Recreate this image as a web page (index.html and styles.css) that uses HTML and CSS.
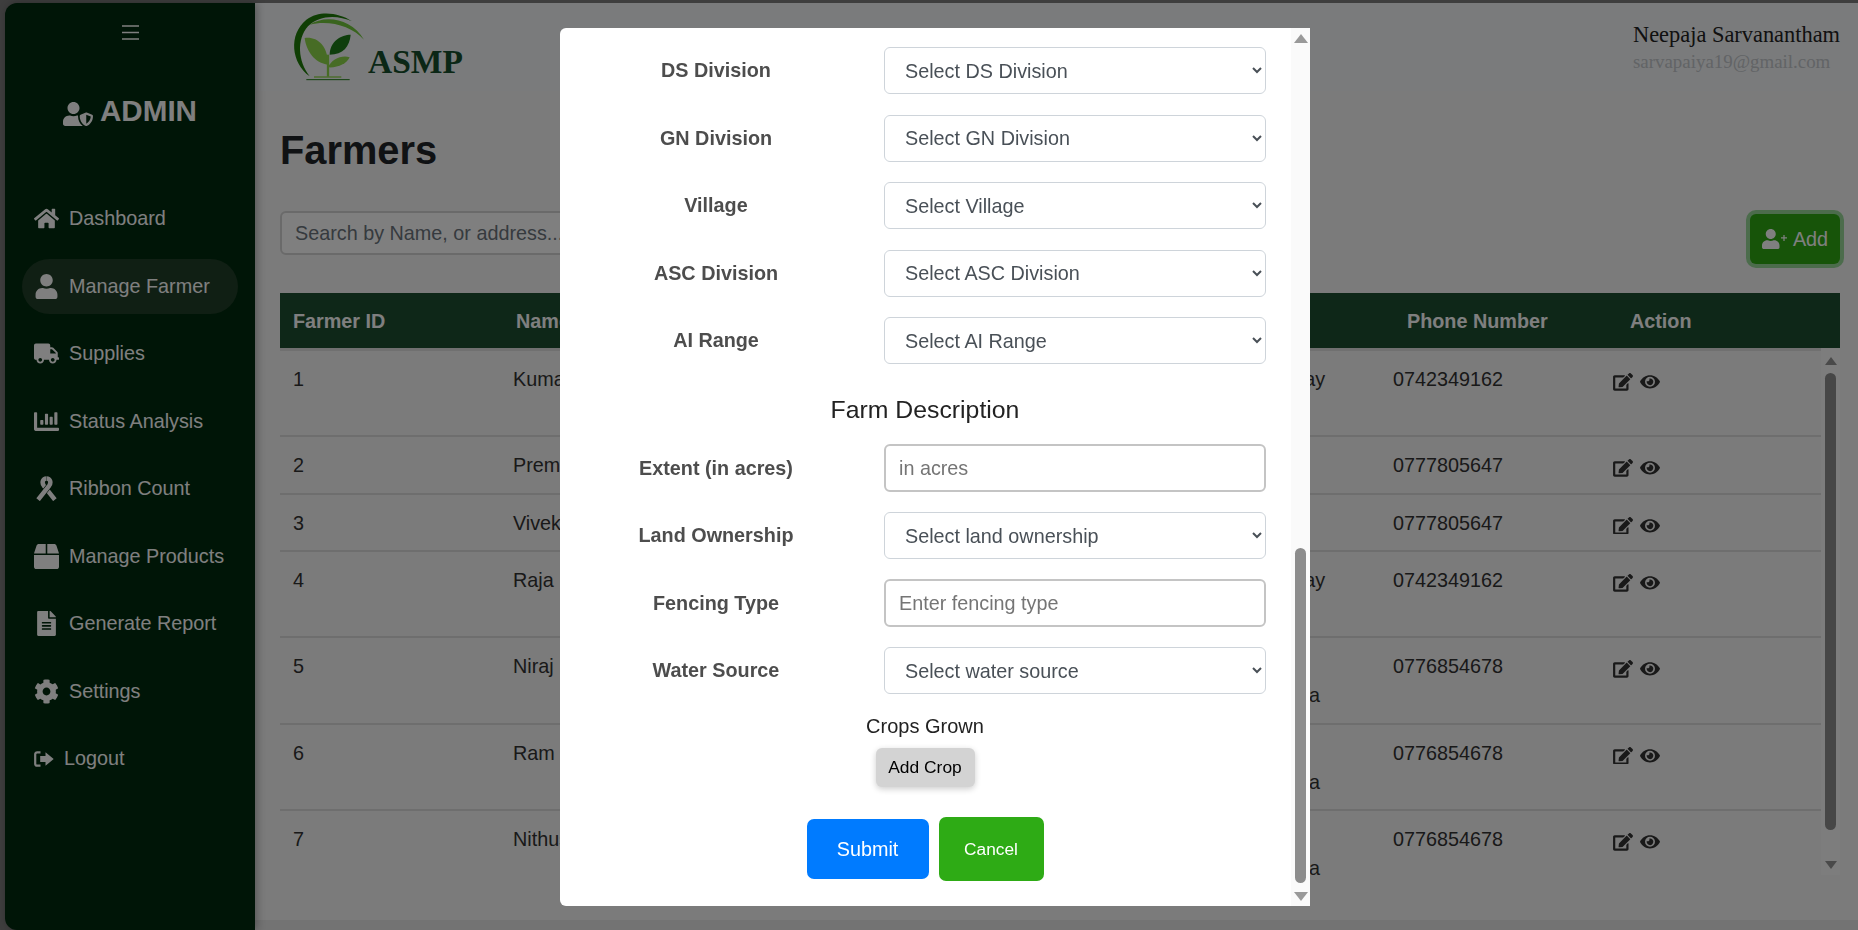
FILE: index.html
```html
<!DOCTYPE html>
<html lang="en">
<head>
  <meta charset="UTF-8">
  <title>Farmers</title>
  <link rel="stylesheet" href="styles.css">
</head>
<body>
  <div class="page">
    <aside class="sidebar">
      <button class="menu-toggle" aria-label="Menu">
        <svg viewBox="0 0 17 15" width="17" height="15"><path d="M0 1h17M0 7.5h17M0 14h17" stroke="#fff" stroke-width="1.5"/></svg>
      </button>
      <div class="brand">
        <svg class="brand-icon" viewBox="0 0 640 512"><path d="M622.3 271.1l-115.2-45c-3.5-1.4-10.3-3.1-17.7 0l-115.2 45c-10.7 4.2-17.7 14-17.7 24.9 0 111.6 68.7 188.8 132.9 213.9 7.4 2.9 14.2 1.4 17.7 0 51.4-20.1 132.9-89.3 132.9-213.9 0-10.9-7-20.7-17.7-24.9zM496 462.4V273.3l95.5 37.3c-5.6 87.1-60.9 135.4-95.5 151.8zM224 256c70.7 0 128-57.3 128-128S294.7 0 224 0 96 57.3 96 128s57.3 128 128 128zm96 40c0-2.5.8-4.8 1.1-7.2-2.5-.1-4.9-.8-7.5-.8h-16.7c-22.2 10.2-46.9 16-72.9 16s-50.6-5.8-72.9-16h-16.7C60.2 288 0 348.2 0 422.4V464c0 26.5 21.5 48 48 48h352c6.8 0 13.3-1.5 19.2-4-54-42.9-99.2-116.7-99.2-212z"/></svg>
        <span>ADMIN</span>
      </div>
      <nav class="nav">
        <a class="nav-item" href="#">
          <svg class="nav-icon" viewBox="0 0 576 512"><path d="M280.37 148.26L96 300.11V464a16 16 0 0 0 16 16l112.06-.29a16 16 0 0 0 15.92-16V368a16 16 0 0 1 16-16h64a16 16 0 0 1 16 16v95.64a16 16 0 0 0 16 16.05L464 480a16 16 0 0 0 16-16V300L295.67 148.26a12.19 12.19 0 0 0-15.3 0zM571.6 251.47L488 182.56V44.05a12 12 0 0 0-12-12h-56a12 12 0 0 0-12 12v72.61L318.47 43a48 48 0 0 0-61 0L4.34 251.47a12 12 0 0 0-1.6 16.9l25.5 31A12 12 0 0 0 45.15 301l235.22-193.74a12.19 12.19 0 0 1 15.3 0L530.9 301a12 12 0 0 0 16.9-1.6l25.5-31a12 12 0 0 0-1.7-16.93z"/></svg>
          Dashboard
        </a>
        <a class="nav-item active" href="#">
          <svg class="nav-icon" viewBox="0 0 448 512"><path d="M224 256c70.7 0 128-57.3 128-128S294.7 0 224 0 96 57.3 96 128s57.3 128 128 128zm89.6 32h-16.7c-22.2 10.2-46.9 16-72.9 16s-50.6-5.8-72.9-16h-16.7C60.2 288 0 348.2 0 422.4V464c0 26.5 21.5 48 48 48h352c26.5 0 48-21.5 48-48v-41.6c0-74.2-60.2-134.4-134.4-134.4z"/></svg>
          Manage Farmer
        </a>
        <a class="nav-item" href="#">
          <svg class="nav-icon" viewBox="0 0 640 512"><path d="M624 352h-16V243.9c0-12.7-5.1-24.9-14.1-33.9L494 110.1c-9-9-21.2-14.1-33.9-14.1H416V48c0-26.5-21.5-48-48-48H48C21.5 0 0 21.5 0 48v320c0 26.5 21.5 48 48 48h16c0 53 43 96 96 96s96-43 96-96h128c0 53 43 96 96 96s96-43 96-96h48c8.8 0 16-7.2 16-16v-32c0-8.8-7.2-16-16-16zM160 464c-26.5 0-48-21.5-48-48s21.5-48 48-48 48 21.5 48 48-21.5 48-48 48zm320 0c-26.5 0-48-21.5-48-48s21.5-48 48-48 48 21.5 48 48-21.5 48-48 48zm80-208H416V144h44.1l99.9 99.9V256z"/></svg>
          Supplies
        </a>
        <a class="nav-item" href="#">
          <svg class="nav-icon" viewBox="0 0 512 512"><path d="M332.8 320h38.4c6.4 0 12.8-6.4 12.8-12.8V172.8c0-6.4-6.4-12.8-12.8-12.8h-38.4c-6.4 0-12.8 6.4-12.8 12.8v134.4c0 6.4 6.4 12.8 12.8 12.8zm96 0h38.4c6.4 0 12.8-6.4 12.8-12.8V76.8c0-6.4-6.4-12.8-12.8-12.8h-38.4c-6.4 0-12.8 6.4-12.8 12.8v230.4c0 6.4 6.4 12.8 12.8 12.8zm-288 0h38.4c6.4 0 12.8-6.4 12.8-12.8v-70.4c0-6.4-6.4-12.8-12.8-12.8h-38.4c-6.4 0-12.8 6.4-12.8 12.8v70.4c0 6.4 6.4 12.8 12.8 12.8zm96 0h38.4c6.4 0 12.8-6.4 12.8-12.8V108.8c0-6.4-6.4-12.8-12.8-12.8h-38.4c-6.4 0-12.8 6.4-12.8 12.8v198.4c0 6.4 6.4 12.8 12.8 12.8zM496 384H64V80c0-8.84-7.16-16-16-16H16C7.16 64 0 71.16 0 80v336c0 17.67 14.33 32 32 32h464c8.84 0 16-7.16 16-16v-32c0-8.84-7.16-16-16-16z"/></svg>
          Status Analysis
        </a>
        <a class="nav-item" href="#">
          <svg class="nav-icon" viewBox="0 0 448 512"><path d="M396 486L168 196C122 130 150 50 224 50" fill="none" stroke="#fff" stroke-width="92"/><path d="M52 486L280 196C326 130 298 50 224 50" fill="none" stroke="#002a0e" stroke-width="116"/><path d="M52 486L280 196C326 130 298 50 224 50" fill="none" stroke="#fff" stroke-width="92"/></svg>
          Ribbon Count
        </a>
        <a class="nav-item" href="#">
          <svg class="nav-icon" viewBox="0 0 512 512"><path d="M509.5 184.6L458.9 32.8C452.4 13.2 434.1 0 413.4 0H272v192h238.7c-.4-2.5-.4-5-1.2-7.4zM240 0H98.6c-20.7 0-39 13.2-45.5 32.8L2.5 184.6c-.8 2.4-.8 4.9-1.2 7.4H240V0zM0 224v240c0 26.5 21.5 48 48 48h416c26.5 0 48-21.5 48-48V224H0z"/></svg>
          Manage Products
        </a>
        <a class="nav-item" href="#">
          <svg class="nav-icon" viewBox="0 0 384 512"><path d="M224 136V0H24C10.7 0 0 10.7 0 24v464c0 13.3 10.7 24 24 24h336c13.3 0 24-10.7 24-24V160H248c-13.2 0-24-10.8-24-24zm64 236c0 6.6-5.4 12-12 12H108c-6.6 0-12-5.4-12-12v-8c0-6.6 5.4-12 12-12h168c6.6 0 12 5.4 12 12v8zm0-64c0 6.6-5.4 12-12 12H108c-6.6 0-12-5.4-12-12v-8c0-6.6 5.4-12 12-12h168c6.6 0 12 5.4 12 12v8zm0-72v8c0 6.6-5.4 12-12 12H108c-6.6 0-12-5.4-12-12v-8c0-6.6 5.4-12 12-12h168c6.6 0 12 5.4 12 12zm96-114.1v6.1H256V0h6.1c6.4 0 12.5 2.5 17 7l97.9 98c4.5 4.5 7 10.6 7 16.9z"/></svg>
          Generate Report
        </a>
        <a class="nav-item" href="#">
          <svg class="nav-icon" viewBox="0 0 512 512"><path d="M487.4 315.7l-42.6-24.6c4.3-23.2 4.3-47 0-70.2l42.6-24.6c4.9-2.8 7.1-8.6 5.5-14-11.1-35.6-30-67.8-54.7-94.6-3.8-4.1-10-5.1-14.8-2.3L380.8 110c-17.9-15.4-38.5-27.3-60.8-35.1V25.8c0-5.6-3.9-10.5-9.4-11.7-36.7-8.2-74.3-7.8-109.2 0-5.5 1.2-9.4 6.1-9.4 11.7V75c-22.2 7.9-42.8 19.8-60.8 35.1L88.7 85.5c-4.9-2.8-11-1.9-14.8 2.3-24.7 26.7-43.6 58.9-54.7 94.6-1.7 5.4.6 11.2 5.5 14L67.3 221c-4.3 23.2-4.3 47 0 70.2l-42.6 24.6c-4.9 2.8-7.1 8.6-5.5 14 11.1 35.6 30 67.8 54.7 94.6 3.8 4.1 10 5.1 14.8 2.3l42.6-24.6c17.9 15.4 38.5 27.3 60.8 35.1v49.2c0 5.6 3.9 10.5 9.4 11.7 36.7 8.2 74.3 7.8 109.2 0 5.5-1.2 9.4-6.1 9.4-11.7v-49.2c22.2-7.9 42.8-19.8 60.8-35.1l42.6 24.6c4.9 2.8 11 1.9 14.8-2.3 24.7-26.7 43.6-58.9 54.7-94.6 1.5-5.5-.7-11.3-5.6-14.1zM256 336c-44.1 0-80-35.9-80-80s35.9-80 80-80 80 35.9 80 80-35.9 80-80 80z"/></svg>
          Settings
        </a>
        <a class="nav-item logout" href="#">
          <svg class="logout-icon" viewBox="0 0 20 16"><path d="M6.5 1.3H3.2A2 2 0 0 0 1.2 3.3v9.4a2 2 0 0 0 2 2h3.3" fill="none" stroke="#fff" stroke-width="2.2"/><path d="M11.5 1.2L19.7 8l-8.2 6.8v-3.7H6.2V4.9h5.3z"/></svg>
          Logout
        </a>
      </nav>
    </aside>

    <main class="main">
      <header class="topbar">
        <div class="logo">
          <svg class="logo-mark" viewBox="30 10 240 225">
            <path d="M95 215C40 175 30 90 85 45C125 15 185 25 222 50C180 32 125 30 90 65C55 105 60 170 95 215Z" fill="#1f7d08"/>
            <path d="M95 60C140 30 220 40 258 105C220 62 150 45 95 60Z" fill="#72c83c"/>
            <path d="M80 100C115 95 150 120 150 180C110 175 85 140 80 100Z" fill="#8ed84a"/>
            <path d="M218 90C190 90 155 110 155 150C195 150 215 125 218 90Z" fill="#1f7d18"/>
            <path d="M215 158C190 150 160 165 150 188C180 190 205 178 215 158Z" fill="#8ed84a"/>
            <path d="M150 150V216" stroke="#8ed84a" stroke-width="7" fill="none"/>
            <path d="M108 217H190" stroke="#8ed84a" stroke-width="4" fill="none"/>
            <path d="M85 225H215" stroke="#1f7d18" stroke-width="3" fill="none"/>
          </svg>
          <span class="logo-text">ASMP</span>
        </div>
        <div class="user">
          <div class="user-name">Neepaja Sarvanantham</div>
          <div class="user-mail">sarvapaiya19@gmail.com</div>
        </div>
      </header>

      <section class="content">
        <h1 class="title">Farmers</h1>
        <div class="toolbar">
          <input class="search" type="text" placeholder="Search by Name, or address...">
          <button class="add-btn">
            <svg viewBox="0 0 640 512" width="25" height="20"><path d="M224 256c70.7 0 128-57.3 128-128S294.7 0 224 0 96 57.3 96 128s57.3 128 128 128zm89.6 32h-16.7c-22.2 10.2-46.9 16-72.9 16s-50.6-5.8-72.9-16h-16.7C60.2 288 0 348.2 0 422.4V464c0 26.5 21.5 48 48 48h352c26.5 0 48-21.5 48-48v-41.6c0-74.2-60.2-134.4-134.4-134.4z"/><path d="M563 153v154M486 230h154" stroke="#fff" stroke-width="32" fill="none"/></svg>
            Add
          </button>
        </div>

        <table class="head-table">
          <colgroup>
            <col class="h-id"><col class="h-name"><col class="h-addr"><col class="h-phone"><col class="h-action">
          </colgroup>
          <thead>
            <tr><th>Farmer ID</th><th>Name</th><th>Address</th><th>Phone Number</th><th>Action</th></tr>
          </thead>
        </table>

        <div class="table-wrap">
          <div class="table-scroll">
            <table class="body-table">
              <colgroup>
                <col class="b-id"><col class="b-name"><col class="b-addr"><col class="b-phone"><col class="b-action">
              </colgroup>
              <tbody>
                <tr>
                  <td>1</td><td>Kumar</td><td>Main Road, Subway<br>Kilinochchi</td><td>0742349162</td>
                  <td><div class="actions"><svg class="act-icon" viewBox="0 0 576 512"><use href="#i-edit"/></svg><svg class="act-icon" viewBox="0 0 576 512"><use href="#i-eye"/></svg></div></td>
                </tr>
                <tr>
                  <td>2</td><td>Premkumar</td><td>Nallur, Jaffna</td><td>0777805647</td>
                  <td><div class="actions"><svg class="act-icon" viewBox="0 0 576 512"><use href="#i-edit"/></svg><svg class="act-icon" viewBox="0 0 576 512"><use href="#i-eye"/></svg></div></td>
                </tr>
                <tr>
                  <td>3</td><td>Vivek</td><td>Nallur, Jaffna</td><td>0777805647</td>
                  <td><div class="actions"><svg class="act-icon" viewBox="0 0 576 512"><use href="#i-edit"/></svg><svg class="act-icon" viewBox="0 0 576 512"><use href="#i-eye"/></svg></div></td>
                </tr>
                <tr>
                  <td>4</td><td>Raja</td><td>Main Road, Subway<br>Kilinochchi</td><td>0742349162</td>
                  <td><div class="actions"><svg class="act-icon" viewBox="0 0 576 512"><use href="#i-edit"/></svg><svg class="act-icon" viewBox="0 0 576 512"><use href="#i-eye"/></svg></div></td>
                </tr>
                <tr>
                  <td>5</td><td>Niraj</td><td>24, Temple Street,<br>Kopay Town, Jaffna</td><td>0776854678</td>
                  <td><div class="actions"><svg class="act-icon" viewBox="0 0 576 512"><use href="#i-edit"/></svg><svg class="act-icon" viewBox="0 0 576 512"><use href="#i-eye"/></svg></div></td>
                </tr>
                <tr>
                  <td>6</td><td>Ram</td><td>24, Temple Street,<br>Kopay Town, Jaffna</td><td>0776854678</td>
                  <td><div class="actions"><svg class="act-icon" viewBox="0 0 576 512"><use href="#i-edit"/></svg><svg class="act-icon" viewBox="0 0 576 512"><use href="#i-eye"/></svg></div></td>
                </tr>
                <tr>
                  <td>7</td><td>Nithushan</td><td>24, Temple Street,<br>Kopay Town, Jaffna</td><td>0776854678</td>
                  <td><div class="actions"><svg class="act-icon" viewBox="0 0 576 512"><use href="#i-edit"/></svg><svg class="act-icon" viewBox="0 0 576 512"><use href="#i-eye"/></svg></div></td>
                </tr>
              </tbody>
            </table>
          </div>
          <div class="rail">
            <span class="arrow-up"></span>
            <span class="rail-thumb"></span>
            <span class="arrow-down"></span>
          </div>
        </div>
      </section>
      <div class="bottom-band"></div>
    </main>
  </div>

  <div class="overlay">
    <div class="modal">
      <form class="modal-body">
        <div class="field-group">
          <div class="field">
            <label>DS Division</label>
            <select><option>Select DS Division</option></select>
          </div>
          <div class="field">
            <label>GN Division</label>
            <select><option>Select GN Division</option></select>
          </div>
          <div class="field">
            <label>Village</label>
            <select><option>Select Village</option></select>
          </div>
          <div class="field">
            <label>ASC Division</label>
            <select><option>Select ASC Division</option></select>
          </div>
          <div class="field">
            <label>AI Range</label>
            <select><option>Select AI Range</option></select>
          </div>
        </div>

        <h3 class="form-heading">Farm Description</h3>

        <div class="field-group tight">
          <div class="field">
            <label>Extent (in acres)</label>
            <input type="text" placeholder="in acres">
          </div>
          <div class="field">
            <label>Land Ownership</label>
            <select><option>Select land ownership</option></select>
          </div>
          <div class="field">
            <label>Fencing Type</label>
            <input type="text" placeholder="Enter fencing type">
          </div>
          <div class="field">
            <label>Water Source</label>
            <select><option>Select water source</option></select>
          </div>
        </div>

        <div class="crops-label">Crops Grown</div>
        <button type="button" class="add-crop">Add Crop</button>

        <div class="form-actions">
          <button type="button" class="submit-btn">Submit</button>
          <button type="button" class="cancel-btn">Cancel</button>
        </div>
      </form>
      <div class="modal-rail">
        <span class="m-arrow-up"></span>
        <span class="m-thumb"></span>
        <span class="m-arrow-down"></span>
      </div>
    </div>
  </div>

  <svg class="icon-defs" width="0" height="0">
    <defs>
      <path id="i-edit" d="M402.6 83.2l90.2 90.2c3.8 3.8 3.8 10 0 13.8L274.4 405.6l-92.8 10.3c-12.4 1.4-22.9-9.1-21.5-21.5l10.3-92.8L388.8 83.2c3.8-3.8 10-3.8 13.8 0zm162-22.9l-48.8-48.8c-15.2-15.2-39.9-15.2-55.2 0l-35.4 35.4c-3.8 3.8-3.8 10 0 13.8l90.2 90.2c3.8 3.8 10 3.8 13.8 0l35.4-35.4c15.2-15.3 15.2-40 0-55.2zM384 346.2V448H64V128h229.8c3.2 0 6.2-1.3 8.5-3.5l40-40c7.6-7.6 2.2-20.5-8.5-20.5H48C21.5 64 0 85.5 0 112v352c0 26.5 21.5 48 48 48h352c26.5 0 48-21.5 48-48V306.2c0-10.7-12.9-16-20.5-8.5l-40 40c-2.2 2.3-3.5 5.3-3.5 8.5z"/>
      <path id="i-eye" d="M572.52 241.4C518.29 135.59 410.93 64 288 64S57.68 135.64 3.48 241.41a32.35 32.35 0 0 0 0 29.19C57.71 376.41 165.07 448 288 448s230.32-71.64 284.52-177.41a32.35 32.35 0 0 0 0-29.19zM288 400a144 144 0 1 1 144-144 143.93 143.93 0 0 1-144 144zm0-240a95.31 95.31 0 0 0-25.31 3.79 47.85 47.85 0 0 1-66.9 66.9A95.78 95.78 0 1 0 288 160z"/>
    </defs>
  </svg>
</body>
</html>
```

FILE: styles.css
```css
* {
  box-sizing: border-box;
}

html, body {
  height: 100%;
}

body {
  margin: 0;
  background: #7c7c7c;
  color: #333;
  font-family: "Liberation Sans", Arial, sans-serif;
  font-size: 19.8px;
  overflow: hidden;
}

.page {
  display: flex;
  height: 100vh;
  padding: 3px 0 0 5px;
}

/* sidebar */
.sidebar {
  width: 250px;
  flex: none;
  background: #002a0e;
  color: #fff;
  border-radius: 12px 0 0 12px;
  box-shadow: 2px 0 8px rgba(0, 0, 0, 0.3);
  display: flex;
  flex-direction: column;
  align-items: center;
  padding-top: 21px;
  position: relative;
}

.menu-toggle {
  background: none;
  border: 0;
  padding: 0;
  height: 16px;
  display: flex;
  align-items: center;
}

.brand {
  display: flex;
  align-items: center;
  gap: 7px;
  height: 34px;
  margin-top: 54px;
  font-size: 29.6px;
  font-weight: bold;
}

.brand-icon {
  width: 30px;
  height: 24px;
  fill: #fff;
  margin-top: 6px;
}

.nav {
  width: 100%;
  margin-top: 63px;
  display: flex;
  flex-direction: column;
  gap: 12.5px;
  padding: 0 17px;
}

.nav-item {
  height: 55px;
  display: flex;
  align-items: center;
  gap: 10px;
  padding-left: 12px;
  border-radius: 28px;
  color: #fff;
  text-decoration: none;
}

.nav-item.active {
  background: #203e28;
}

.nav-icon {
  width: 25px;
  height: 25px;
  fill: #fff;
  flex: none;
}

.logout-icon {
  width: 20px;
  height: 16px;
  fill: #fff;
  flex: none;
}

/* main area */
.main {
  flex: 1;
  min-width: 0;
  display: flex;
  flex-direction: column;
  background: #f6f6f6;
}

.topbar {
  height: 88px;
  flex: none;
  background: #f5f7f9;
  display: flex;
  justify-content: space-between;
  padding: 0 18px 0 33px;
}

.logo {
  display: flex;
  align-items: flex-start;
}

.logo-mark {
  width: 80px;
  height: 75px;
  margin-top: 5px;
}

.logo-text {
  font-family: "Liberation Serif", serif;
  font-weight: bold;
  font-size: 33.5px;
  color: #174f2c;
  margin: 41px 0 0 0;
  line-height: 36px;
}

.user {
  width: 207px;
  padding-top: 18px;
  font-family: "Liberation Serif", serif;
}

.user-name {
  font-size: 22.4px;
  line-height: 28px;
  color: #222;
  white-space: nowrap;
}

.user-mail {
  font-size: 18.9px;
  line-height: 26px;
  color: #c4c8cc;
  white-space: nowrap;
}

.content {
  flex: 1;
  min-height: 0;
  padding: 0 18px 0 25px;
}

.title {
  margin: 0;
  padding-top: 36px;
  height: 120px;
  font-size: 39.8px;
  line-height: 47px;
  font-weight: bold;
  color: #212529;
}

.toolbar {
  display: flex;
  justify-content: space-between;
  align-items: flex-start;
  height: 82px;
}

.search {
  width: 600px;
  height: 44px;
  border: 2px solid #d4d4d4;
  border-radius: 6px;
  padding: 0 13px;
  background: #fff;
  font: inherit;
}

.search::placeholder {
  color: #6c757d;
  opacity: 1;
}

.add-btn {
  margin-top: 3px;
  width: 90px;
  height: 50px;
  background: #2ea812;
  color: #fff;
  border: 0;
  border-radius: 6px;
  box-shadow: 0 0 0 4px #98d898;
  font: inherit;
  display: flex;
  align-items: center;
  justify-content: center;
  gap: 6px;
  padding: 0;
}

.add-btn svg {
  fill: #fff;
}

/* tables */
.head-table,
.body-table {
  width: 100%;
  table-layout: fixed;
  border-collapse: separate;
  border-spacing: 0;
}

.head-table th {
  height: 55px;
  padding: 2px 13px 0;
  background: #1c4e30;
  color: #fff;
  font-size: 19.8px;
  text-align: left;
  white-space: nowrap;
}

.h-id { width: 223px; }
.h-name { width: 500px; }
.h-addr { width: 391px; }
.h-phone { width: 223px; }
.h-action { width: 223px; }

.b-id { width: 220px; }
.b-name { width: 635px; }
.b-addr { width: 245px; }
.b-phone { width: 220px; }
.b-action { width: 221px; }

.table-wrap {
  display: flex;
  height: 527px;
}

.table-scroll {
  width: 1541px;
  flex: none;
  border-top: 3px solid #e0e0e0;
  overflow: hidden;
}

.body-table td {
  padding: 14px 13px 12px;
  line-height: 29.2px;
  vertical-align: top;
  border-bottom: 2px solid #dcdcdc;
  white-space: nowrap;
}

.actions {
  display: flex;
  gap: 7px;
  height: 29.2px;
  padding-top: 8px;
}

.act-icon {
  width: 20px;
  height: 17.7px;
  fill: #333;
}

.rail {
  flex: 1;
  background: #fafafa;
  display: flex;
  flex-direction: column;
  align-items: center;
  padding-top: 9px;
}

.arrow-up {
  width: 0;
  height: 0;
  border: 6px solid transparent;
  border-top: 0;
  border-bottom: 8px solid #949494;
}

.rail-thumb {
  width: 11px;
  height: 457px;
  margin-top: 8px;
  border-radius: 6px;
  background: #8e8e8e;
}

.arrow-down {
  width: 0;
  height: 0;
  margin-top: 31px;
  border: 6px solid transparent;
  border-bottom: 0;
  border-top: 8px solid #949494;
}

.bottom-band {
  height: 10px;
  flex: none;
  background: #e6e6e6;
}

/* modal */
.overlay {
  position: fixed;
  inset: 0;
  background: rgba(0, 0, 0, 0.5);
  display: flex;
  align-items: flex-start;
  padding: 28px 0 0 560px;
}

.modal {
  width: 750px;
  height: 878px;
  background: #fff;
  border-radius: 6px 0 0 6px;
  display: flex;
  overflow: hidden;
}

.modal-body {
  flex: 1;
  padding: 19px 25px 0 24px;
  display: flex;
  flex-direction: column;
  align-items: center;
}

.field-group {
  width: 100%;
  display: flex;
  flex-direction: column;
  gap: 20.5px;
}

.field-group.tight {
  gap: 20px;
}

.field {
  display: grid;
  grid-template-columns: 264px 1fr;
  column-gap: 36px;
  align-items: center;
}

.field label {
  text-align: center;
  font-weight: bold;
  color: #4d4d4d;
}

.field select {
  height: 47px;
  padding: 0 16px;
  background: #fff;
  color: #495057;
  border: 1px solid #ced4da;
  border-radius: 6px;
  font: inherit;
}

.field input {
  height: 48px;
  padding: 0 13px;
  border: 2px solid #c4c4c4;
  border-radius: 6px;
  background: #fff;
  font: inherit;
}

.field input::placeholder {
  color: #757575;
  opacity: 1;
}

.form-heading {
  margin: 31px 0 19px;
  font-size: 24.8px;
  line-height: 30px;
  font-weight: normal;
  color: #222;
}

.crops-label {
  margin-top: 17px;
  line-height: 30px;
  font-size: 20px;
  color: #222;
}

.add-crop {
  margin-top: 7px;
  width: 99px;
  height: 39px;
  padding: 0;
  background: #d3d3d3;
  color: #000;
  border: 0;
  border-radius: 6px;
  box-shadow: 0 2px 6px rgba(0, 0, 0, 0.2);
  font-family: inherit;
  font-size: 17.4px;
}

.form-actions {
  margin-top: 30px;
  display: flex;
  align-items: center;
  gap: 10px;
}

.submit-btn,
.cancel-btn {
  padding: 0;
  border: 0;
  color: #fff;
  font-family: inherit;
}

.submit-btn {
  width: 122px;
  height: 60px;
  background: #007bff;
  border-radius: 7px;
  font-size: 19.8px;
}

.cancel-btn {
  width: 105px;
  height: 64px;
  background: #2eab15;
  border-radius: 7px;
  font-size: 17.3px;
}

.modal-rail {
  width: 19px;
  flex: none;
  background: #fafafa;
  display: flex;
  flex-direction: column;
  align-items: center;
  padding-top: 6px;
}

.m-arrow-up {
  width: 0;
  height: 0;
  border: 7px solid transparent;
  border-top: 0;
  border-bottom: 9px solid #999;
}

.m-thumb {
  width: 10.5px;
  height: 335px;
  margin-top: 505px;
  border-radius: 6px;
  background: #8c8c8c;
}

.m-arrow-down {
  width: 0;
  height: 0;
  margin-top: 9px;
  border: 7px solid transparent;
  border-bottom: 0;
  border-top: 9px solid #999;
}

.icon-defs {
  position: absolute;
}
```
